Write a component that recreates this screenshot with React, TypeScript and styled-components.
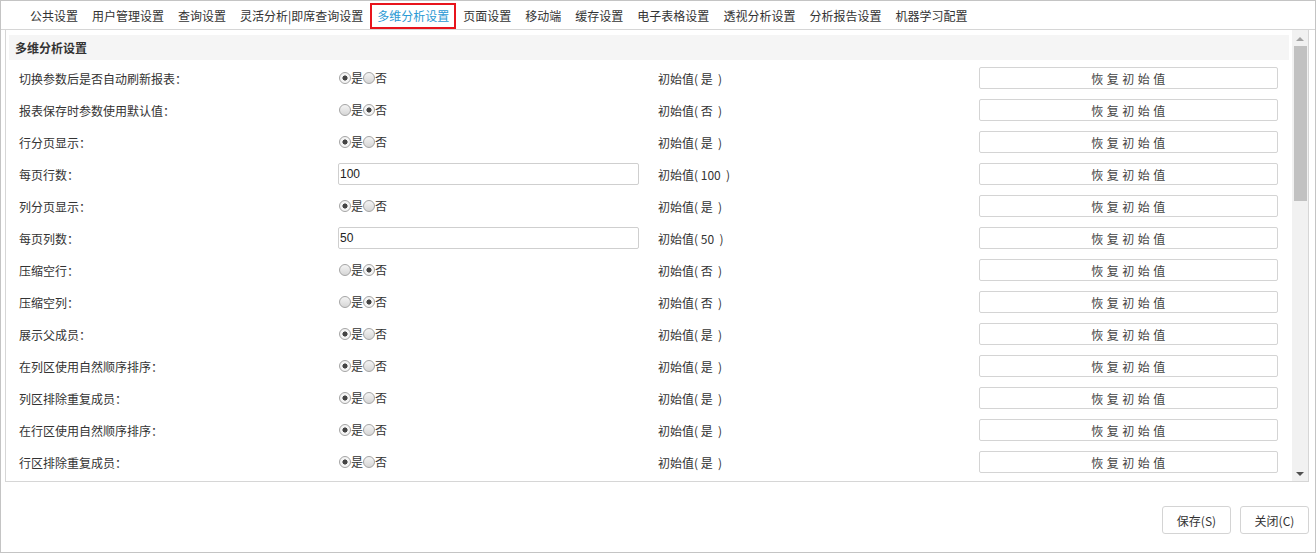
import React from 'react'
import styled, { createGlobalStyle } from 'styled-components'

const GlobalStyle = createGlobalStyle`
  html, body {
    margin: 0;
    padding: 0;
    background: #ffffff;
  }
  * {
    box-sizing: border-box;
  }
`

const tabs = [
  '公共设置',
  '用户管理设置',
  '查询设置',
  '灵活分析|即席查询设置',
  '多维分析设置',
  '页面设置',
  '移动端',
  '缓存设置',
  '电子表格设置',
  '透视分析设置',
  '分析报告设置',
  '机器学习配置',
]

type RowData = {
  label: string
  kind: 'radio' | 'input'
  value: string
  initial: string
}

const rows: RowData[] = [
  { label: '切换参数后是否自动刷新报表：', kind: 'radio', value: 'yes', initial: '是' },
  { label: '报表保存时参数使用默认值：', kind: 'radio', value: 'no', initial: '否' },
  { label: '行分页显示：', kind: 'radio', value: 'yes', initial: '是' },
  { label: '每页行数：', kind: 'input', value: '100', initial: '100' },
  { label: '列分页显示：', kind: 'radio', value: 'yes', initial: '是' },
  { label: '每页列数：', kind: 'input', value: '50', initial: '50' },
  { label: '压缩空行：', kind: 'radio', value: 'no', initial: '否' },
  { label: '压缩空列：', kind: 'radio', value: 'no', initial: '否' },
  { label: '展示父成员：', kind: 'radio', value: 'yes', initial: '是' },
  { label: '在列区使用自然顺序排序：', kind: 'radio', value: 'yes', initial: '是' },
  { label: '列区排除重复成员：', kind: 'radio', value: 'yes', initial: '是' },
  { label: '在行区使用自然顺序排序：', kind: 'radio', value: 'yes', initial: '是' },
  { label: '行区排除重复成员：', kind: 'radio', value: 'yes', initial: '是' },
]

const Frame = styled.div`
  width: 1316px;
  height: 553px;
  border: 1px solid #c4c4c4;
  display: flex;
  flex-direction: column;
  font-family: 'Microsoft YaHei', 'Noto Sans CJK SC', sans-serif;
  font-size: 12px;
  color: #333333;
  overflow: hidden;
`

const TabBar = styled.div`
  display: flex;
  height: 29px;
  padding: 2px 0 0 22px;
  border-bottom: 1px solid #d6d6d6;
  flex-shrink: 0;
`

const Tab = styled.div<{ $active?: boolean }>`
  height: 26px;
  line-height: 22px;
  padding: 0 5px;
  border: 2px solid ${(p) => (p.$active ? '#e8141c' : 'transparent')};
  border-bottom-width: ${(p) => (p.$active ? '2px' : '0')};
  color: ${(p) => (p.$active ? '#2c9ad4' : '#333333')};
  white-space: nowrap;
  cursor: pointer;
`

const Panel = styled.div`
  display: flex;
  height: 452px;
  margin: 0 6px 0 4px;
  border: 1px solid #d6d6d6;
  border-top: none;
  flex-shrink: 0;
`

const Content = styled.div`
  flex: 1;
  overflow: hidden;
  padding: 5px 3px 0 3px;
`

const SectionHeader = styled.div`
  height: 25px;
  line-height: 25px;
  background: #f5f5f5;
  padding-left: 6px;
  font-weight: bold;
  color: #333333;
`

const RowList = styled.div`
  padding-top: 2px;
`

const Row = styled.div`
  display: grid;
  grid-template-columns: 320px 300px 340px 299px;
  align-items: center;
  height: 32px;
  padding-left: 10px;
`

const Label = styled.div`
  white-space: nowrap;
`

const RadioGroup = styled.div`
  display: flex;
  align-items: center;
  height: 16px;
`

const RadioDot = styled.span<{ $checked?: boolean }>`
  width: 12px;
  height: 12px;
  border-radius: 50%;
  border: 1px solid #a4a4a4;
  background: ${(p) =>
    p.$checked
      ? 'radial-gradient(circle, #444 0 2.3px, #f4f4f4 2.8px)'
      : 'linear-gradient(#f4f4f4, #d6d6d6)'};
  flex-shrink: 0;
`

const RadioText = styled.span`
  line-height: 16px;
`

const TextInput = styled.input`
  width: 301px;
  height: 22px;
  margin-left: -1px;
  border: 1px solid #cfcfcf;
  border-radius: 2px;
  padding: 0 0 0 1px;
  font-family: 'Liberation Sans', Arial, sans-serif;
  font-size: 12px;
  color: #222222;
  outline: none;
`

const Initial = styled.div`
  padding-left: 19px;
  white-space: pre;
`

const ResetButton = styled.button`
  height: 22px;
  width: 299px;
  background: #ffffff;
  border: 1px solid #d4d4d4;
  border-radius: 2px;
  font-family: 'Microsoft YaHei', 'Noto Sans CJK SC', sans-serif;
  font-size: 12px;
  color: #444444;
  letter-spacing: 3.5px;
  padding: 0 0 0 3px;
  cursor: pointer;
`

const Scrollbar = styled.div`
  width: 16px;
  background: #f1f1f1;
  display: flex;
  flex-direction: column;
  align-items: center;
  padding-top: 1px;
`

const Arrow = styled.div<{ $down?: boolean; $dim?: boolean }>`
  width: 0;
  height: 0;
  margin: 6px 0 5px;
  border-left: 4px solid transparent;
  border-right: 4px solid transparent;
  ${(p) =>
    p.$down
      ? `border-top: 4px solid ${p.$dim ? '#a3a3a3' : '#505050'};`
      : `border-bottom: 4px solid ${p.$dim ? '#a3a3a3' : '#505050'};`}
`

const Thumb = styled.div`
  width: 13px;
  height: 155px;
  background: #c1c1c1;
`

const Spacer = styled.div`
  flex: 1;
`

const Footer = styled.div`
  display: flex;
  justify-content: flex-end;
  gap: 9px;
  padding: 24px 6px 0 0;
`

const FooterButton = styled.button`
  width: 69px;
  height: 28px;
  background: #ffffff;
  border: 1px solid #d4d4d4;
  border-radius: 3px;
  font-family: 'Microsoft YaHei', 'Noto Sans CJK SC', sans-serif;
  font-size: 12px;
  color: #333333;
  padding: 0;
  cursor: pointer;
`

const Radio = ({ value }: { value: string }) => (
  <RadioGroup>
    <RadioDot $checked={value === 'yes'} />
    <RadioText>是</RadioText>
    <RadioDot $checked={value === 'no'} />
    <RadioText>否</RadioText>
  </RadioGroup>
)

const App = () => (
  <>
    <GlobalStyle />
    <Frame>
      <TabBar>
        {tabs.map((t) => (
          <Tab key={t} $active={t === '多维分析设置'}>
            {t}
          </Tab>
        ))}
      </TabBar>
      <Panel>
        <Content>
          <SectionHeader>多维分析设置</SectionHeader>
          <RowList>
            {rows.map((r) => (
              <Row key={r.label}>
                <Label>{r.label}</Label>
                <div>
                  {r.kind === 'radio' ? (
                    <Radio value={r.value} />
                  ) : (
                    <TextInput defaultValue={r.value} />
                  )}
                </div>
                <Initial>{`初始值( ${r.initial}  )`}</Initial>
                <ResetButton>恢复初始值</ResetButton>
              </Row>
            ))}
          </RowList>
        </Content>
        <Scrollbar>
          <Arrow $dim />
          <Thumb />
          <Spacer />
          <Arrow $down />
        </Scrollbar>
      </Panel>
      <Footer>
        <FooterButton>保存(S)</FooterButton>
        <FooterButton>关闭(C)</FooterButton>
      </Footer>
    </Frame>
  </>
)

export default App
